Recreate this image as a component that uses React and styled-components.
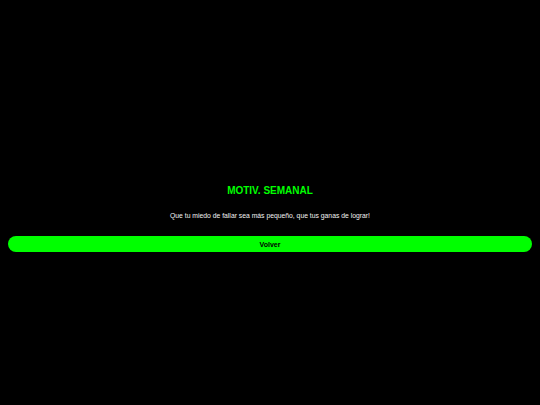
import styled, { createGlobalStyle } from "styled-components";

const GlobalStyle = createGlobalStyle`
  html, body {
    margin: 0;
    background: #000;
    font-family: "Liberation Sans", Arial, sans-serif;
  }
`;

const Page = styled.div`
  min-height: 100vh;
  display: flex;
  flex-direction: column;
  justify-content: center;
  align-items: stretch;
  padding: 32px 8px 0;
  box-sizing: border-box;
`;

const Title = styled.h1`
  margin: 0;
  color: #00ff00;
  font-size: 10px;
  font-weight: bold;
  text-align: center;
`;

const Quote = styled.p`
  margin: 16px 0 0;
  color: #f2f2f2;
  font-size: 6.8px;
  text-align: center;
`;

const Button = styled.button`
  margin-top: 17px;
  height: 16px;
  border: none;
  border-radius: 8px;
  background: #00ff00;
  color: #000;
  font-family: inherit;
  font-size: 7px;
  font-weight: bold;
  cursor: pointer;
`;

const App = () => {
  return (
    <Page>
      <GlobalStyle />
      <Title>MOTIV. SEMANAL</Title>
      <Quote>Que tu miedo de fallar sea más pequeño, que tus ganas de lograr!</Quote>
      <Button>Volver</Button>
    </Page>
  );
};

export default App;
